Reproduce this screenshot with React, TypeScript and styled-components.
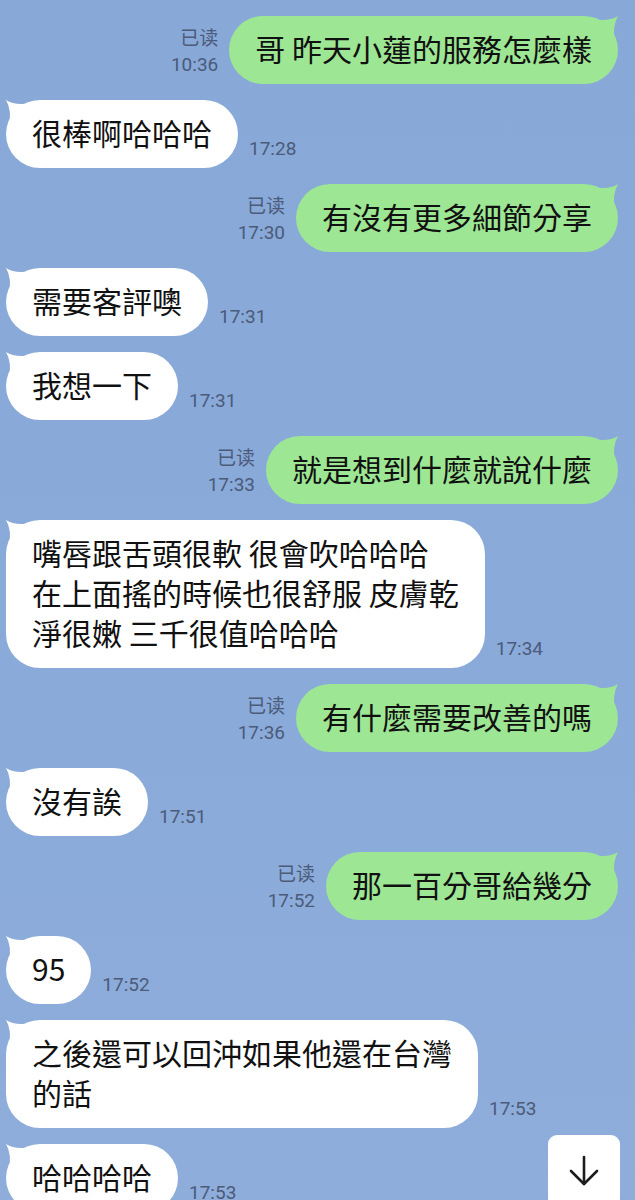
import React from "react";
import styled, { createGlobalStyle } from "styled-components";

type Msg = {
  side: "in" | "out";
  lines: string[];
  time: string;
};

const messages: Msg[] = [
  { side: "out", lines: ["哥 昨天小蓮的服務怎麼樣"], time: "10:36" },
  { side: "in", lines: ["很棒啊哈哈哈"], time: "17:28" },
  { side: "out", lines: ["有沒有更多細節分享"], time: "17:30" },
  { side: "in", lines: ["需要客評噢"], time: "17:31" },
  { side: "in", lines: ["我想一下"], time: "17:31" },
  { side: "out", lines: ["就是想到什麼就說什麼"], time: "17:33" },
  {
    side: "in",
    lines: ["嘴唇跟舌頭很軟 很會吹哈哈哈", "在上面搖的時候也很舒服 皮膚乾", "淨很嫩 三千很值哈哈哈"],
    time: "17:34",
  },
  { side: "out", lines: ["有什麼需要改善的嗎"], time: "17:36" },
  { side: "in", lines: ["沒有誒"], time: "17:51" },
  { side: "out", lines: ["那一百分哥給幾分"], time: "17:52" },
  { side: "in", lines: ["95"], time: "17:52" },
  { side: "in", lines: ["之後還可以回沖如果他還在台灣", "的話"], time: "17:53" },
  { side: "in", lines: ["哈哈哈哈"], time: "17:53" },
];

const App = () => {
  return (
    <>
      <GlobalStyle />
      <Screen>
        <Chat>
          {messages.map((m, i) => (
            <Row key={i} $side={m.side}>
              {m.side === "out" && (
                <Meta $side="out">
                  <span>已读</span>
                  <span>{m.time}</span>
                </Meta>
              )}
              <Bubble $side={m.side}>
                <Tail $side={m.side} viewBox="0 0 26 26">
                  {m.side === "in" ? (
                    <path d="M0 0 Q9 6 26 3 L26 26 L3 26 Q6 10 0 0 Z" />
                  ) : (
                    <path d="M26 0 Q17 6 0 3 L0 26 L23 26 Q20 10 26 0 Z" />
                  )}
                </Tail>
                {m.lines.map((l, j) => (
                  <Line key={j}>{l}</Line>
                ))}
              </Bubble>
              {m.side === "in" && (
                <Meta $side="in">
                  <span>{m.time}</span>
                </Meta>
              )}
            </Row>
          ))}
        </Chat>
        <ScrollButton>
          <svg width="34" height="34" viewBox="0 0 34 34" fill="none" stroke="#1c1c1c" strokeWidth="2.6" strokeLinecap="round" strokeLinejoin="round">
            <path d="M17 3 V30" />
            <path d="M4 17 L17 30 L30 17" />
          </svg>
        </ScrollButton>
      </Screen>
    </>
  );
};

export default App;

const GlobalStyle = createGlobalStyle`
  html, body {
    margin: 0;
    padding: 0;
    background: #8aa9d8;
  }
  body {
    font-family: "Noto Sans CJK TC", "Noto Sans", sans-serif;
  }
`;

const Screen = styled.div`
  position: relative;
  width: 635px;
  height: 1200px;
  overflow: hidden;
  background: linear-gradient(180deg, #88a8d8 0%, #8aaad9 60%, #8eaddb 100%);
`;

const Chat = styled.div`
  display: flex;
  flex-direction: column;
  gap: 16px;
  padding: 16px 17px 0 6px;
`;

const Row = styled.div<{ $side: "in" | "out" }>`
  display: flex;
  align-items: flex-end;
  justify-content: ${(p) => (p.$side === "out" ? "flex-end" : "flex-start")};
  gap: 11px;
`;

const Bubble = styled.div<{ $side: "in" | "out" }>`
  position: relative;
  background: ${(p) => (p.$side === "out" ? "#9de694" : "#ffffff")};
  color: #111;
  border-radius: 34px;
  padding: 12px 26px 16px;
  font-family: "Noto Sans CJK TC", "Noto Sans", sans-serif;
  font-size: 30px;
  line-height: 40px;
  white-space: nowrap;
  fill: ${(p) => (p.$side === "out" ? "#9de694" : "#ffffff")};
`;

const Tail = styled.svg<{ $side: "in" | "out" }>`
  position: absolute;
  top: 0;
  ${(p) => (p.$side === "in" ? "left: 0;" : "right: 0;")}
  width: 26px;
  height: 26px;
`;

const Line = styled.div`
  position: relative;
`;

const Meta = styled.div<{ $side: "in" | "out" }>`
  display: flex;
  flex-direction: column;
  align-items: ${(p) => (p.$side === "out" ? "flex-end" : "flex-start")};
  padding-bottom: 6px;
  font-family: Roboto, "Noto Sans CJK SC", sans-serif;
  font-size: 19px;
  line-height: 26px;
  color: #4b5b79;
`;

const ScrollButton = styled.div`
  position: absolute;
  left: 548px;
  top: 1135px;
  width: 72px;
  height: 72px;
  border-radius: 9px;
  background: #fff;
  display: flex;
  align-items: center;
  justify-content: center;
`;
